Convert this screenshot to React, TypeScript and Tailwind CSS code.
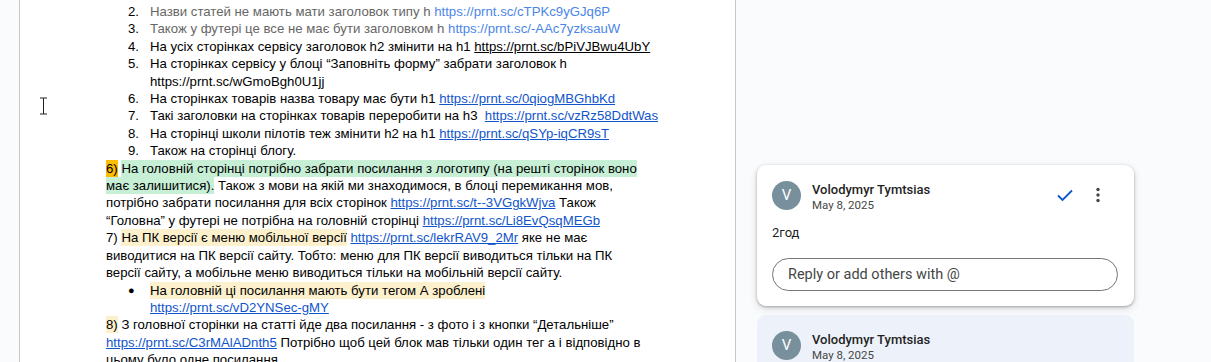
import React from "react";

const link = "text-[#1155cc] underline";
const lightLink = "text-[#4a86e8]";
const hl = "py-[1px]";

function Num({ n }: { n: string }) {
  return <span className="inline-block w-[22px] shrink-0">{n}</span>;
}

function Item({ n, children }: { n: string; children: React.ReactNode }) {
  return (
    <div className="flex pl-[22px]">
      <Num n={n} />
      <div>{children}</div>
    </div>
  );
}

function Doc() {
  return (
    <div className="pl-[86px] pt-[3px] text-[13.2px] leading-[17.4px] text-black whitespace-nowrap font-['Liberation_Sans',Arial,sans-serif]">
      <Item n="2.">
        <span className="text-[#666666]">Назви статей не мають мати заголовок типу h </span>
        <span className={lightLink}>https://prnt.sc/cTPKc9yGJq6P</span>
      </Item>
      <Item n="3.">
        <span className="text-[#666666]">Також у футері це все не має бути заголовком h </span>
        <span className={lightLink}>https://prnt.sc/-AAc7yzksauW</span>
      </Item>
      <Item n="4.">
        На усіх сторінках сервісу заголовок h2 змінити на h1{" "}
        <span className="underline">https://prnt.sc/bPiVJBwu4UbY</span>
      </Item>
      <Item n="5.">
        На сторінках сервісу у блоці “Заповніть форму” забрати заголовок h
        <br />
        https://prnt.sc/wGmoBgh0U1jj
      </Item>
      <Item n="6.">
        На сторінках товарів назва товару має бути h1{" "}
        <span className={link}>https://prnt.sc/0qiogMBGhbKd</span>
      </Item>
      <Item n="7.">
        Такі заголовки на сторінках товарів переробити на h3&nbsp;{" "}
        <span className={link}>https://prnt.sc/vzRz58DdtWas</span>
      </Item>
      <Item n="8.">
        На сторінці школи пілотів теж змінити h2 на h1{" "}
        <span className={link}>https://prnt.sc/qSYp-iqCR9sT</span>
      </Item>
      <Item n="9.">Також на сторінці блогу.</Item>

      <p>
        <span className={`bg-[#fbbc04] ${hl}`}>6)</span>{" "}
        <span className={`bg-[#c6efd5] ${hl}`}>
          На головній сторінці потрібно забрати посилання з логотипу (на решті сторінок воно
          <br />
          має залишитися).
        </span>{" "}
        Також з мови на якій ми знаходимося, в блоці перемикання мов,
        <br />
        потрібно забрати посилання для всіх сторінок{" "}
        <span className={link}>https://prnt.sc/t--3VGgkWjva</span> Також
        <br />
        “Головна” у футері не потрібна на головній сторінці{" "}
        <span className={link}>https://prnt.sc/Li8EvQsqMEGb</span>
      </p>
      <p>
        7) <span className={`bg-[#fdf0cc] ${hl}`}>На ПК версії є меню мобільної версії</span>{" "}
        <span className={link}>https://prnt.sc/lekrRAV9_2Mr</span> яке не має
        <br />
        виводитися на ПК версії сайту. Тобто: меню для ПК версії виводиться тільки на ПК
        <br />
        версії сайту, а мобільне меню виводиться тільки на мобільній версії сайту.
      </p>
      <div className="flex pl-[22px]">
        <span className="inline-block w-[22px] shrink-0 text-[11px]">●</span>
        <div>
          <span className={`bg-[#fdf0cc] ${hl}`}>На головній ці посилання мають бути тегом А зроблені</span>
          <br />
          <span className={link}>https://prnt.sc/vD2YNSec-gMY</span>
        </div>
      </div>
      <p>
        <span className={`bg-[#fdf0cc] ${hl}`}>8)</span> З головної сторінки на статті йде два посилання - з фото і з кнопки “Детальніше”
        <br />
        <span className={link}>https://prnt.sc/C3rMAlADnth5</span> Потрібно щоб цей блок мав тільки один тег а і відповідно в
        <br />
        цьому було одне посилання.
      </p>
    </div>
  );
}

function Avatar() {
  return (
    <div className="w-[29px] h-[29px] rounded-full bg-[#78909c] flex items-center justify-center text-white text-[15px] shrink-0">
      V
    </div>
  );
}

function Header({ actions }: { actions?: boolean }) {
  return (
    <div className="flex items-start">
      <Avatar />
      <div className="ml-[11px] flex flex-col pt-[1px]">
        <span className="text-[13px] leading-[16px] font-medium text-[#1f1f1f]">Volodymyr Tymtsias</span>
        <span className="text-[11.5px] leading-[14px] text-[#444746]">May 8, 2025</span>
      </div>
      {actions && (
        <div className="ml-auto flex items-center gap-[22px] pt-[6px] pr-[19px]">
          <svg width="18" height="14" viewBox="0 0 18 14" fill="none">
            <path d="M2 7.5 L6.5 12 L16 2.5" stroke="#0b57d0" strokeWidth="1.8" />
          </svg>
          <svg width="4" height="16" viewBox="0 0 4 16" fill="#444746">
            <circle cx="2" cy="2.5" r="1.7" />
            <circle cx="2" cy="8" r="1.7" />
            <circle cx="2" cy="13.5" r="1.7" />
          </svg>
        </div>
      )}
    </div>
  );
}

function Comments() {
  return (
    <div className="pl-[21px] pt-[165px] flex flex-col gap-[9px] font-['Roboto',sans-serif]">
      <div className="w-[377px] bg-white rounded-[9px] shadow-[0_1px_3px_rgba(0,0,0,0.3),0_3px_8px_rgba(0,0,0,0.12)] px-[15px] pt-[16px] pb-[15px]">
        <Header actions />
        <div className="mt-[12px] text-[13px] leading-[18px] text-[#1f1f1f]">2год</div>
        <div className="mt-[16px] h-[33px] w-[346px] rounded-full border border-[#747775] flex items-center pl-[15px] text-[14.5px] text-[#444746]">
          Reply or add others with @
        </div>
      </div>
      <div className="w-[377px] h-[80px] bg-[#edf2fa] rounded-[9px] px-[15px] pt-[16px]">
        <Header />
      </div>
    </div>
  );
}

export default function App() {
  return (
    <div className="relative flex h-[362px] w-[1211px] overflow-hidden bg-[#f9fbfd]">
      <div className="w-[19px] shrink-0" />
      <div className="w-[717px] shrink-0 bg-white border-x border-[#c7c7c7]">
        <Doc />
      </div>
      <div className="flex-1">
        <Comments />
      </div>
      <svg className="absolute left-[39px] top-[97px]" width="9" height="18" viewBox="0 0 9 18" fill="none">
        <path d="M1 1 H8 M4.5 1 V17 M1 17 H8" stroke="#222" strokeWidth="1" />
      </svg>
    </div>
  );
}
